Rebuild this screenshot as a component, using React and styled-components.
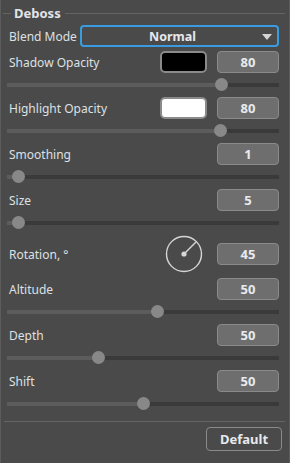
import React from 'react'
import styled, {createGlobalStyle} from 'styled-components'

const Global = createGlobalStyle`
  html, body { margin: 0; padding: 0; background: #4a4a4a; }
  body { font-family: "Noto Sans", "DejaVu Sans", sans-serif; }
`

const Panel = styled.div`
  width: 290px;
  height: 463px;
  box-sizing: border-box;
  background: #4a4a4a;
  border-left: 1px solid #5c5c5c;
  border-right: 1px solid #5c5c5c;
  padding: 0 4px 0 2px;
  display: flex;
  flex-direction: column;
  color: #dde0e4;
  font-size: 12px;
`

const Legend = styled.div`
  display: flex;
  align-items: center;
  height: 25px;
  padding-top: 1px;
  box-sizing: border-box;
  &::before, &::after {
    content: '';
    height: 1px;
    background: #646464;
  }
  &::before { width: 8px; margin-right: 3px; }
  &::after { flex: 1; margin-left: 4px; }
`

const LegendText = styled.span`
  font-weight: bold;
  font-size: 13px;
  color: #e2e4e8;
`

const Row = styled.div`
  display: flex;
  align-items: center;
  height: ${p => p.$h || 22}px;
  margin-bottom: ${p => p.$mb || 0}px;
  padding-left: 6px;
  margin-right: 6px;
`

const Label = styled.span`
  flex: 1;
  white-space: nowrap;
`

const Select = styled.div`
  width: 199px;
  height: 22px;
  box-sizing: border-box;
  border: 2px solid #3a9be0;
  border-radius: 4px;
  display: flex;
  align-items: center;
  position: relative;
  font-weight: bold;
  font-size: 12.5px;
  color: #e6e8ec;
  justify-content: center;
  padding-right: 14px;
`

const Arrow = styled.span`
  position: absolute;
  right: 5px;
  top: 7px;
  width: 0;
  height: 0;
  border-left: 5px solid transparent;
  border-right: 5px solid transparent;
  border-top: 6px solid #d4d4d4;
`

const Swatch = styled.div`
  width: 47px;
  height: 22px;
  box-sizing: border-box;
  border: 2px solid #8a8a8a;
  border-radius: 5px;
  background: ${p => p.$color};
  margin-right: 10px;
`

const Value = styled.div`
  width: 62px;
  height: 22px;
  box-sizing: border-box;
  background: #6e6e6e;
  border: 1px solid #8a8a8a;
  border-radius: 4px;
  display: flex;
  align-items: center;
  justify-content: center;
  font-weight: bold;
  font-size: 13px;
  color: #e8eaee;
`

const SliderWrap = styled.div`
  height: 24px;
  padding-left: 4px;
  margin-right: 6px;
  position: relative;
`

const Track = styled.div`
  position: relative;
  margin-top: 10px;
  height: 4px;
  background: #3a3a3a;
`

const Fill = styled.div`
  height: 100%;
  background: #5c5c5c;
`

const Thumb = styled.div`
  position: absolute;
  top: -5px;
  width: 13px;
  height: 13px;
  border-radius: 50%;
  background: #888888;
  margin-left: -6px;
`

const Block = styled.div`
  display: flex;
  flex-direction: column;
`

const Separator = styled.div`
  height: 1px;
  background: #646464;
  margin: 5px 0 5px 1px;
`

const Footer = styled.div`
  display: flex;
  justify-content: flex-end;
  padding-right: 3px;
`

const Button = styled.div`
  width: 76px;
  height: 24px;
  box-sizing: border-box;
  border: 1px solid #8a8a8a;
  border-radius: 4px;
  display: flex;
  align-items: center;
  justify-content: center;
  font-weight: bold;
  font-size: 13px;
  color: #e6e8ec;
`

const Dial = () => (
  <svg width="38" height="38" viewBox="0 0 38 38" style={{marginRight: 14}}>
    <circle cx="19" cy="19" r="17.5" fill="none" stroke="#d6d6d6" strokeWidth="1.4" />
    <line x1="19" y1="19" x2="31" y2="7" stroke="#d6d6d6" strokeWidth="1.4" />
    <circle cx="19" cy="19" r="2.6" fill="#d6d6d6" />
  </svg>
)

const Slider = ({pos}) => (
  <SliderWrap>
    <Track>
      <Fill style={{width: `calc(6px + ${pos * 100}% - ${pos * 12}px)`}} />
      <Thumb style={{left: `calc(6px + ${pos * 100}% - ${pos * 12}px)`}} />
    </Track>
  </SliderWrap>
)

const controls = [
  {label: 'Smoothing', value: '1', pos: 0.02},
  {label: 'Size', value: '5', pos: 0.02},
]

const lower = [
  {label: 'Altitude', value: '50', pos: 0.554},
  {label: 'Depth', value: '50', pos: 0.327},
  {label: 'Shift', value: '50', pos: 0.5},
]

const App = () => (
  <>
    <Global />
    <Panel>
      <Legend><LegendText>Deboss</LegendText></Legend>
      <Row $mb={4}>
        <Label>Blend Mode</Label>
        <Select>Normal<Arrow /></Select>
      </Row>
      <Block>
        <Row>
          <Label>Shadow Opacity</Label>
          <Swatch $color="#000" />
          <Value>80</Value>
        </Row>
        <Slider pos={0.8} />
      </Block>
      <Block>
        <Row>
          <Label>Highlight Opacity</Label>
          <Swatch $color="#fff" />
          <Value>80</Value>
        </Row>
        <Slider pos={0.796} />
      </Block>
      {controls.map(c => (
        <Block key={c.label}>
          <Row>
            <Label>{c.label}</Label>
            <Value>{c.value}</Value>
          </Row>
          <Slider pos={c.pos} />
        </Block>
      ))}
      <Row $h={38} $mb={5}>
        <Label>Rotation, °</Label>
        <Dial />
        <Value>45</Value>
      </Row>
      {lower.map(c => (
        <Block key={c.label}>
          <Row>
            <Label>{c.label}</Label>
            <Value>{c.value}</Value>
          </Row>
          <Slider pos={c.pos} />
        </Block>
      ))}
      <Separator />
      <Footer>
        <Button>Default</Button>
      </Footer>
    </Panel>
  </>
)

export default App
